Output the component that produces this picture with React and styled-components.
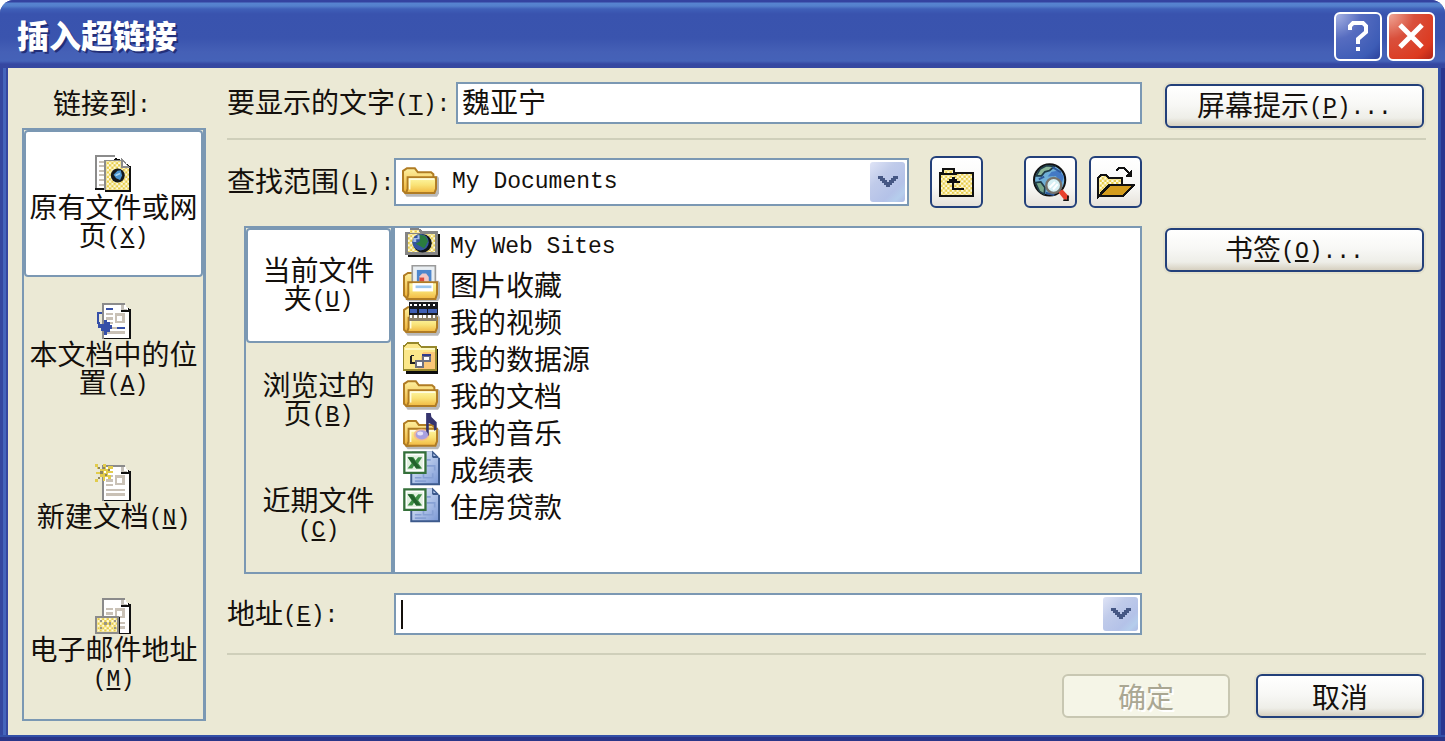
import { useState } from 'react';
import styled, { createGlobalStyle, css } from 'styled-components';

const GlobalStyle = createGlobalStyle`
	body {
		margin: 0;
		background: #fff;
	}

	*, *::before, *::after {
		box-sizing: border-box;
	}

	button, input, select {
		margin: 0;
		padding: 0;
		border: none;
		background: none;
		color: inherit;
		font: inherit;
	}
`;

const edge = '#7b98b3';
const face = '#ebe9d5';

const Dialog = styled.div`
	display: flex;
	flex-direction: column;
	min-height: 100vh;
	border-radius: 14px 14px 0 0;
	overflow: hidden;
	background:
		linear-gradient(#3350a8 0 2px, #2a3588 2px) bottom / 100% 6px no-repeat,
		linear-gradient(to right, #34479f 0 3px, #4465bc 3px 6px, #3547a0 6px) left / 8px 100% no-repeat,
		linear-gradient(to right, #3350a8 0 3px, #2a3790 3px) right / 7px 100% no-repeat,
		#34439f;
	color: #14100c;
	font-family: 'Noto Sans CJK SC', sans-serif;
	font-size: 28px;
	line-height: 28px;
`;

const TitleBar = styled.header`
	display: flex;
	align-items: center;
	gap: 5px;
	height: 68px;
	padding: 4px 10px 0 17px;
	background: linear-gradient(
		#3443a0 0,
		#3443a0 2px,
		#5784d0 3px,
		#5480cc 6px,
		#3f5fb8 9px,
		#3953ae 14px,
		#3a54ae 38px,
		#4560b6 52px,
		#4562b8 61px,
		#3548a2 64px,
		#3547a0 68px
	);
`;

const Title = styled.h1`
	flex: 1;
	margin: 0 0 4px;
	color: #fff;
	font-size: 32px;
	font-weight: 900;
	line-height: 40px;
	text-shadow: 2px 2px 0 #232f78;
`;

const CaptionButton = styled.button`
	display: flex;
	align-items: center;
	justify-content: center;
	width: 48px;
	height: 49px;
	border: 2px solid #fff;
	border-radius: 6px;
	background: ${({ $close }) =>
		$close
			? 'radial-gradient(circle at 0 0, #f0a898 0, #d9503c 40%, #dc3a20 80%, #b02418 100%)'
			: 'radial-gradient(circle at 0 0, #a8b4e4 0, #566cc0 40%, #3d5cb6 80%, #2c419c 100%)'};
`;

const Body = styled.main`
	flex: 1;
	display: grid;
	grid-template-columns: 184px 1fr;
	column-gap: 21px;
	margin: 0 7px 6px 8px;
	padding: 14px 12px 14px 14px;
	background: ${face};
`;

const Sidebar = styled.nav`
	display: flex;
	flex-direction: column;
`;

const SidebarTitle = styled.div`
	height: 46px;
	padding-left: 31px;
	line-height: 40px;
`;

const LinkTargets = styled.div`
	flex: 1;
	display: flex;
	flex-direction: column;
	border: 2px solid ${edge};
	border-right-width: 3px;
`;

const selected = css`
	background: #fff;
	box-shadow: inset 0 0 0 2px ${edge};
	border-radius: 4px;
`;

const Tab = styled.button`
	flex: 1;
	display: flex;
	flex-direction: column;
	align-items: center;
	justify-content: center;
	width: 100%;
	padding: 0 ${({ $inset }) => ($inset ? '14px' : '2px')};
	text-align: center;
	${({ $active }) => $active && selected}
`;

const Content = styled.section`
	min-width: 0;
	padding-bottom: 3px;
`;

const PushButton = styled.button`
	height: 44px;
	border: 2px solid #23407a;
	border-radius: 6px;
	background: linear-gradient(#fff 0, #f8f8f6 45%, #eeeee8 80%, #d6d0c0 100%);
	box-shadow: 0 0 0 2px #e4e1cc;
	white-space: nowrap;

	&:disabled {
		border-color: #c8c7b2;
		background: #f5f5e7;
		box-shadow: none;
		color: #aaa793;
		text-shadow: 2px 2px 0 #fff;
	}
`;

const Row = styled.div`
	display: grid;
	grid-template-columns: 1fr 259px;
	column-gap: 23px;
	align-items: start;
	padding-right: 2px;
	margin-top: ${({ $top }) => $top || 0}px;

	> ${PushButton} {
		margin-top: 2px;
	}
`;

const Field = styled.div`
	display: flex;
	align-items: center;
	min-width: 0;
`;

const Label = styled.label`
	flex: none;
	width: ${({ $wide }) => ($wide ? '229px' : '167px')};
	white-space: nowrap;
`;

const Divider = styled.hr`
	height: 2px;
	margin: ${({ $top }) => $top}px 0 0;
	border: none;
	background: #cfcfba;
`;

const TextBox = styled.input`
	flex: 1;
	min-width: 0;
	height: 42px;
	padding: 0 4px 4px;
	border: 2px solid ${edge};
	background: #fff;
	outline: none;
`;

const SelectWrap = styled.div`
	flex: 1;
	position: relative;
	display: flex;
	height: 48px;
	margin-right: 21px;

	> svg {
		position: absolute;
		left: 8px;
		top: 5px;
		pointer-events: none;
	}
`;

const Select = styled.select`
	flex: 1;
	min-width: 0;
	appearance: none;
	padding: 0 44px 0 56px;
	border: 2px solid ${edge};
	border-radius: 0;
	background: #fff;
	font-family: 'Liberation Mono', monospace;
	font-size: 23px;
	outline: none;
`;

const arrowFace = css`
	display: flex;
	align-items: center;
	justify-content: center;
	width: 35px;
	border-radius: 3px;
	background: linear-gradient(135deg, #dfe4f6 0, #c0cbea 35%, #b4c2e8 70%, #b5cdec 85%, #aebbe4 100%);
`;

const SelectArrow = styled.span`
	${arrowFace}
	position: absolute;
	top: 4px;
	right: 4px;
	bottom: 4px;
	pointer-events: none;
`;

const ComboBox = styled.div`
	flex: 1;
	display: flex;
	align-items: center;
	min-width: 0;
	height: 42px;
	padding: 2px 2px 2px 5px;
	border: 2px solid ${edge};
	background: #fff;
`;

const Caret = styled.span`
	width: 2px;
	height: 29px;
	background: #14100c;
`;

const ComboInput = styled.input`
	flex: 1;
	min-width: 0;
	outline: none;
`;

const ComboArrow = styled.button`
	${arrowFace}
	height: 34px;
`;

const ToolButton = styled.button`
	display: flex;
	align-items: center;
	justify-content: center;
	width: 53px;
	height: 52px;
	margin-left: ${({ $left }) => $left || 0}px;
	border: 2px solid #23407a;
	border-radius: 6px;
	background: linear-gradient(#fff 0, #f8f8f6 60%, #e6e2da 100%);
`;

const Browser = styled.div`
	display: flex;
	height: 348px;
	margin-left: 17px;
	border: 2px solid ${edge};
`;

const Places = styled.div`
	display: flex;
	flex-direction: column;
	width: 149px;
	border-right: 4px solid ${edge};
`;

const FileList = styled.ul`
	flex: 1;
	margin: 0;
	padding: 0;
	list-style: none;
	background: #fff;
`;

const FileItem = styled.li`
	display: flex;
	align-items: center;
	gap: 10px;
	height: 37px;
	padding-left: 8px;
`;

const Footer = styled.footer`
	display: flex;
	flex-wrap: wrap;
	justify-content: flex-end;
	gap: 26px;
	margin-top: 19px;
	padding-right: 2px;

	${PushButton} {
		width: 168px;
	}
`;

const Mono = styled.span`
	font-family: 'Liberation Mono', monospace;
	font-size: 23px;
	vertical-align: 2px;

	u {
		text-decoration-thickness: 2px;
		text-underline-offset: 2px;
	}
`;

function Key({ letter, tail }) {
	return (
		<Mono>
			(<u>{letter}</u>){tail}
		</Mono>
	);
}

function Icon({ children, size = 37 }) {
	return (
		<svg width={size} height={size} viewBox="0 0 112 112" aria-hidden="true">
			{children}
		</svg>
	);
}

function Chevron() {
	return (
		<svg width="22" height="16" viewBox="0 0 22 16" aria-hidden="true">
			<path d="M1 2H6V4H8V6H10V8H12V6H14V4H16V2H21V5H19V7H17V9H15V11H13V13H9V11H7V9H5V7H3V5H1Z" fill="#455784" />
		</svg>
	);
}

function Defs() {
	return (
		<svg width="0" height="0" style={{ position: 'absolute' }} aria-hidden="true">
			<defs>
				<linearGradient id="folderBack" x1="0" y1="0" x2="0" y2="1">
					<stop offset="0" stopColor="#fdf0a0" />
					<stop offset="1" stopColor="#efb032" />
				</linearGradient>
				<linearGradient id="folderFront" x1="0" y1="0" x2="0" y2="1">
					<stop offset="0" stopColor="#fdf9a8" />
					<stop offset="0.5" stopColor="#f9e276" />
					<stop offset="1" stopColor="#f2b840" />
				</linearGradient>
				<linearGradient id="bookBlue" x1="0" y1="0" x2="1" y2="1">
					<stop offset="0" stopColor="#eaf2fc" />
					<stop offset="1" stopColor="#7d9ad6" />
				</linearGradient>
				<pattern id="dots" width="14" height="14" patternUnits="userSpaceOnUse">
					<rect width="14" height="14" fill="#fffbe0" />
					<rect width="7" height="7" fill="#e8cc48" />
					<rect x="7" y="7" width="7" height="7" fill="#e8cc48" />
				</pattern>
			</defs>
		</svg>
	);
}

function FolderBack() {
	return (
		<>
			<path d="M12 40H108L112 46V92L106 102H14L8 94Z" fill="#8a8a8a" opacity="0.6" />
			<path
				d="M3 24 9 20 15 16H39L48 28H88L95 34V86L10 91 3 84Z"
				fill="url(#folderBack)"
				stroke="#b07c24"
				strokeWidth="6"
			/>
		</>
	);
}

function FolderFront({ top = 43 }) {
	return (
		<>
			<path
				d={`M17 ${top}H103V78L98 91H12L17 78Z`}
				fill="url(#folderFront)"
				stroke="#b07c24"
				strokeWidth="6"
			/>
			<path d={`M23 80V${top + 6}H97`} fill="none" stroke="#fffde0" strokeWidth="5" />
		</>
	);
}

function FolderIcon() {
	return (
		<Icon>
			<FolderBack />
			<FolderFront />
		</Icon>
	);
}

function WebFolderIcon() {
	return (
		<Icon>
			<g shapeRendering="crispEdges">
				<path d="M14 17H112V88H14Z" fill="#111" />
				<path d="M7 12H20V0H48L58 9H105V82H7Z" fill="#858585" />
				<path d="M14 18H98V74H14Z" fill="url(#dots)" />
				<path d="M20 6H46L54 16H20Z" fill="url(#dots)" />
			</g>
			<circle cx="59" cy="46" r="28" fill="#101418" />
			<circle cx="53" cy="43" r="25" fill="#3455a0" />
			<path d="M49 20 68 24 76 40 64 62 50 54 38 48 52 40Z" fill="#2b7c3f" />
			<path d="M31 30H44V22H50V34H40V42H31Z" fill="#a4bce8" />
		</Icon>
	);
}

function PictureFolderIcon() {
	return (
		<Icon>
			<g transform="translate(0 8)">
				<FolderBack />
			</g>
			<path d="M28 2H98V82H28Z" fill="#e9eef2" stroke="#9a9a9a" strokeWidth="5" />
			<path d="M42 15H86V50H42Z" fill="#4d86cc" />
			<path d="M50 50V34L58 26H70L78 36V50Z" fill="#f4c8c4" />
			<path d="M50 38H64V50H50Z" fill="#dc4a3c" />
			<path d="M16 52H103V88L98 103H12L16 88Z" fill="url(#folderFront)" stroke="#b07c24" strokeWidth="6" />
			<path d="M29 55H91V80H29Z" fill="#fff" />
			<path d="M38 62H86V70H38Z" fill="#9cc8f0" />
		</Icon>
	);
}

function VideoFolderIcon() {
	return (
		<Icon>
			<FolderBack />
			<FolderFront top={48} />
			<g shapeRendering="crispEdges">
				<path d="M17 0H105V40H17Z" fill="#16181c" />
				<path d="M20 20H102V33H20Z" fill="#3f5fb4" />
				<path d="M20 10H102" stroke="#fff" strokeWidth="7" strokeDasharray="7 7" />
				<path d="M17 38H102V56H17Z" fill="#8b8068" />
				<path d="M20 44H102" stroke="#fff" strokeWidth="8" strokeDasharray="8 6" />
				<path d="M46 20V33M74 20V33" stroke="#16181c" strokeWidth="5" />
			</g>
		</Icon>
	);
}

function DataFolderIcon() {
	return (
		<Icon>
			<g shapeRendering="crispEdges">
				<path d="M8 30H106V105H8Z" fill="#0c0c0c" />
				<path d="M2 22 14 13H46L56 24H100V94H2Z" fill="#fbe78a" stroke="#96882c" strokeWidth="5" />
				<path d="M60 40H98V92H44Z" fill="#fbc878" />
				<path d="M6 28H98V34H6Z" fill="#fdf8c0" />
				<path d="M24 50V72H36M24 50H32" fill="none" stroke="#222" strokeWidth="5" />
				<path d="M60 52H82V68H60ZM38 68H60V86H38Z" fill="#fff" stroke="#6c7080" strokeWidth="6" />
				<path d="M58 49H84" stroke="#2f3b8c" strokeWidth="5" />
			</g>
		</Icon>
	);
}

function MusicFolderIcon() {
	return (
		<Icon>
			<g transform="translate(0 8)">
				<FolderBack />
				<FolderFront top={40} />
			</g>
			<ellipse cx="56" cy="66" rx="24" ry="18" fill="#f4b490" opacity="0.8" />
			<path d="M70 0H84L86 12 102 28V50L94 54V38L78 30V68H70Z" fill="#35346e" />
			<ellipse cx="57" cy="66" rx="19" ry="14" fill="#a8a0e0" />
			<ellipse cx="52" cy="62" rx="9" ry="6" fill="#e6e2fa" />
		</Icon>
	);
}

function ExcelIcon() {
	return (
		<Icon>
			<path d="M28 4H90L98 18 112 24V107H22V60Z" fill="#3d5a8c" />
			<path d="M28 4H90V24H106V101H28Z" fill="url(#bookBlue)" />
			<path d="M90 6 104 20H90Z" fill="#b8ccf0" stroke="#3d5a8c" strokeWidth="4" />
			<path
				d="M72 30H84M72 48H96V62M36 84H56M62 62V84H90V70M36 94H70"
				fill="none"
				stroke="#86a0d4"
				strokeWidth="5"
			/>
			<path d="M4 7H68V69H4Z" fill="#fff" stroke="#35703a" strokeWidth="7" />
			<path d="M12 16H60V60H12Z" fill="#e2f0e0" />
			<path d="M14 22H32L38 32 46 22H58L46 40 58 56H40L34 47 28 56H14L26 40Z" fill="#3d8f45" />
			<path d="M14 22H28L54 56H40Z" fill="#23622c" />
		</Icon>
	);
}

function UpFolderIcon() {
	return (
		<Icon>
			<g shapeRendering="crispEdges">
				<path d="M5 98V28H14V16H48V26H106V98Z" fill="url(#dots)" stroke="#111" strokeWidth="6" />
				<path d="M5 30H56" stroke="#111" strokeWidth="5" />
				<path d="M46 46V76H80" fill="none" stroke="#111" strokeWidth="6" />
				<path d="M26 57H66V51H58V45H50V39H42V45H34V51H26Z" fill="#111" />
			</g>
		</Icon>
	);
}

function SearchWebIcon() {
	return (
		<Icon size={38}>
			<circle cx="52" cy="50" r="46" fill="#70b0d8" stroke="#111" strokeWidth="6" />
			<path d="M12 38 24 18 42 8 66 10 52 22 38 26 28 38Z" fill="#8cb89a" stroke="#1f3c48" strokeWidth="5" />
			<path d="M10 58 26 56 38 72 36 92 22 84Z" fill="#78a88c" stroke="#1f3c48" strokeWidth="5" />
			<path d="M58 26 80 22 94 40 88 58 70 38 46 40Z" fill="#4479c4" />
			<path d="M36 40 20 48M60 12 86 28M40 88 66 94" stroke="#2f5a9c" strokeWidth="6" />
			<path d="M76 84 90 78 110 100 98 112Z" fill="#e8402c" />
			<path d="M92 110H106V96" fill="none" stroke="#111" strokeWidth="5" />
			<circle cx="64" cy="66" r="22" fill="#d6f0f4" stroke="#77736c" strokeWidth="7" />
			<path d="M52 72 68 56M62 78 76 62" stroke="#fff" strokeWidth="6" />
		</Icon>
	);
}

function OpenFolderIcon() {
	return (
		<Icon size={38}>
			<g shapeRendering="crispEdges">
				<path d="M4 98V42L10 36H28L34 44H74V66H34L4 98Z" fill="url(#dots)" stroke="#111" strokeWidth="6" />
				<path d="M6 98 38 66H108L76 98Z" fill="#d49c1c" stroke="#111" strokeWidth="6" />
				<path d="M56 22 66 15H80L98 34" fill="none" stroke="#111" strokeWidth="6" />
				<path d="M104 18V40H84Z" fill="#111" />
			</g>
		</Icon>
	);
}

function Page() {
	return (
		<g shapeRendering="crispEdges">
			<path d="M26 12H90L96 16 110 24V116H26Z" fill="#111" />
			<path d="M22 4H88L102 24V108H22Z" fill="#fff" />
			<path d="M80 6H88V20H98V26H80Z" fill="#c4c0b8" />
			<path d="M80 28H110" stroke="#111" strokeWidth="7" />
			<path d="M25 114V7H90" fill="none" stroke="#8b8b8b" strokeWidth="7" />
			<path d="M34 36H54M34 50H54M34 64H54M34 79H90M34 92H90" stroke="#c9c1b6" strokeWidth="7" />
			<path d="M64 37H87V61H64Z" fill="none" stroke="#c9c1b6" strokeWidth="8" />
		</g>
	);
}

function WebPageIcon() {
	return (
		<Icon>
			<g shapeRendering="crispEdges">
				<path d="M0 0H60V106H0Z" fill="#fff" />
				<path d="M3 106V3H62" fill="none" stroke="#8b8b8b" strokeWidth="7" />
				<path
					d="M12 20H28M12 34H28M12 48H28M12 62H28M12 76H28M12 90H28"
					stroke="#c9c1b6"
					strokeWidth="6"
				/>
				<path d="M0 104H30" stroke="#111" strokeWidth="6" />
				<path d="M62 8 84 18 110 36V112H30V60Z" fill="#111" />
				<path d="M30 14H82L102 36V106H30Z" fill="url(#dots)" />
				<path d="M82 14V36H102Z" fill="#fff" stroke="#8b8b8b" strokeWidth="4" />
				<path d="M30 106V17H84" fill="none" stroke="#8b8b8b" strokeWidth="5" />
			</g>
			<circle cx="69" cy="62" r="21" fill="#15181c" />
			<path d="M56 60 68 48 78 46 82 62 76 76 64 70Z" fill="#4a94d0" />
			<path d="M62 62 76 56" stroke="#a8d4f0" strokeWidth="5" />
		</Icon>
	);
}

function PlaceIcon() {
	return (
		<Icon>
			<Page />
			<g shapeRendering="crispEdges">
				<path d="M34 21H54M68 78H90" stroke="#3650a8" strokeWidth="6" />
				<path d="M20 34H9V62L20 74" fill="none" stroke="#3650a8" strokeWidth="7" />
				<path d="M26 54H36V62H44V70H52V82H44V90H36V100H28V88H18V80H10V68H26Z" fill="#3650a8" />
			</g>
		</Icon>
	);
}

function NewPageIcon() {
	return (
		<Icon>
			<Page />
			<g shapeRendering="crispEdges">
				<path
					d="M0 0H8V8H16V16H24V0H32V14H40V6H54V14H46V22H54V28H40V34H48V44H38V38H30V52H24V40H16V46H8V54H0V46H8V38H14V30H4V24H14V16H6V8H0Z"
					fill="#e2cc4c"
				/>
				<path d="M8 8H16V16H8ZM24 8H30V16H24ZM40 14H46V20H40ZM16 22H24V30H16ZM8 38H16V44H8ZM30 30H36V36H30Z" fill="#8d8560" />
				<path d="M26 20H32V28H26Z" fill="#fff" />
			</g>
		</Icon>
	);
}

function MailIcon() {
	return (
		<Icon>
			<Page />
			<g shapeRendering="crispEdges">
				<path d="M4 62H75V116H4Z" fill="#111" />
				<path d="M3 61H69V108H3Z" fill="url(#dots)" stroke="#8b8b8b" strokeWidth="6" />
				<path
					d="M14 70H21V77H14ZM28 84H35V77H28ZM42 77H49V84H42ZM56 70H63V77H56ZM14 98H21V91H14ZM56 98H63V91H56Z"
					fill="#9b9684"
				/>
			</g>
		</Icon>
	);
}

const targets = [
	{ text: '原有文件或网页', letter: 'X', icon: WebPageIcon },
	{ text: '本文档中的位置', letter: 'A', icon: PlaceIcon },
	{ text: '新建文档', letter: 'N', icon: NewPageIcon },
	{ text: '电子邮件地址', letter: 'M', icon: MailIcon },
];

const places = [
	{ text: '当前文件夹', letter: 'U' },
	{ text: '浏览过的页', letter: 'B' },
	{ text: '近期文件', letter: 'C' },
];

const files = [
	{ name: 'My Web Sites', icon: WebFolderIcon, latin: true },
	{ name: '图片收藏', icon: PictureFolderIcon },
	{ name: '我的视频', icon: VideoFolderIcon },
	{ name: '我的数据源', icon: DataFolderIcon },
	{ name: '我的文档', icon: FolderIcon },
	{ name: '我的音乐', icon: MusicFolderIcon },
	{ name: '成绩表', icon: ExcelIcon },
	{ name: '住房贷款', icon: ExcelIcon },
];

export default function App() {
	const [target, setTarget] = useState(0);
	const [place, setPlace] = useState(0);
	const [text, setText] = useState('魏亚宁');
	const [address, setAddress] = useState('');

	return (
		<Dialog role="dialog" aria-labelledby="dialog-title">
			<GlobalStyle />
			<Defs />
			<TitleBar>
				<Title id="dialog-title">插入超链接</Title>
				<CaptionButton aria-label="帮助">
					<svg width="24" height="32" viewBox="0 0 24 32" aria-hidden="true">
						<path
							d="M4 10V6L7 3H17L20 6V12L12 19V24M12 27V31"
							fill="none"
							stroke="#fff"
							strokeWidth="4"
						/>
					</svg>
				</CaptionButton>
				<CaptionButton $close aria-label="关闭">
					<svg width="26" height="28" viewBox="0 0 26 28" aria-hidden="true">
						<path d="M2 3 24 25M24 3 2 25" stroke="#fff" strokeWidth="5" />
					</svg>
				</CaptionButton>
			</TitleBar>
			<Body>
				<Sidebar>
					<SidebarTitle>
						链接到<Mono>:</Mono>
					</SidebarTitle>
					<LinkTargets>
						{targets.map(({ text: label, letter, icon: TargetIcon }, i) => (
							<Tab key={letter} $active={i === target} onClick={() => setTarget(i)}>
								<TargetIcon />
								<span>
									{label}
									<Key letter={letter} />
								</span>
							</Tab>
						))}
					</LinkTargets>
				</Sidebar>
				<Content>
					<Row>
						<Field>
							<Label $wide htmlFor="display-text">
								要显示的文字
								<Key letter="T" tail=":" />
							</Label>
							<TextBox id="display-text" value={text} onChange={(e) => setText(e.target.value)} />
						</Field>
						<PushButton>
							屏幕提示
							<Key letter="P" tail="..." />
						</PushButton>
					</Row>
					<Divider $top={10} />
					<Row $top={16}>
						<Field>
							<Label htmlFor="look-in">
								查找范围
								<Key letter="L" tail=":" />
							</Label>
							<SelectWrap>
								<Select id="look-in">
									<option>My Documents</option>
								</Select>
								<FolderIcon />
								<SelectArrow>
									<Chevron />
								</SelectArrow>
							</SelectWrap>
							<ToolButton aria-label="上一级文件夹">
								<UpFolderIcon />
							</ToolButton>
							<ToolButton $left={41} aria-label="浏览 Web">
								<SearchWebIcon />
							</ToolButton>
							<ToolButton $left={12} aria-label="浏览文件">
								<OpenFolderIcon />
							</ToolButton>
						</Field>
					</Row>
					<Row $top={18}>
						<Browser>
							<Places>
								{places.map(({ text: label, letter }, i) => (
									<Tab key={letter} $inset $active={i === place} onClick={() => setPlace(i)}>
										<span>
											{label}
											<Key letter={letter} />
										</span>
									</Tab>
								))}
							</Places>
							<FileList>
								{files.map(({ name, icon: FileIcon, latin }) => (
									<FileItem key={name}>
										<FileIcon />
										{latin ? <Mono>{name}</Mono> : <span>{name}</span>}
									</FileItem>
								))}
							</FileList>
						</Browser>
						<PushButton>
							书签
							<Key letter="O" tail="..." />
						</PushButton>
					</Row>
					<Row $top={19}>
						<Field>
							<Label htmlFor="address">
								地址
								<Key letter="E" tail=":" />
							</Label>
							<ComboBox>
								<Caret />
								<ComboInput id="address" value={address} onChange={(e) => setAddress(e.target.value)} />
								<ComboArrow aria-label="展开地址列表">
									<Chevron />
								</ComboArrow>
							</ComboBox>
						</Field>
					</Row>
					<Divider $top={18} />
					<Footer>
						<PushButton disabled>确定</PushButton>
						<PushButton>取消</PushButton>
					</Footer>
				</Content>
			</Body>
		</Dialog>
	);
}
